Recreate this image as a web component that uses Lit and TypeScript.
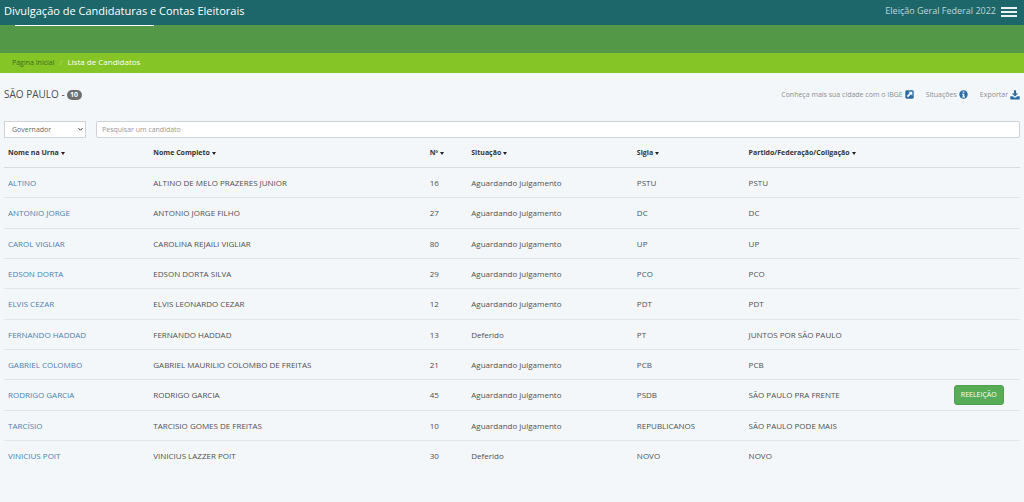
import { LitElement, html, css } from "lit";
import { customElement, state } from "lit/decorators.js";

interface Candidate {
  urna: string;
  nome: string;
  numero: number;
  situacao: string;
  sigla: string;
  coligacao: string;
  reeleicao?: boolean;
}

const PENDING = "Aguardando julgamento";

const CANDIDATES: Candidate[] = [
  { urna: "ALTINO", nome: "ALTINO DE MELO PRAZERES JUNIOR", numero: 16, situacao: PENDING, sigla: "PSTU", coligacao: "PSTU" },
  { urna: "ANTONIO JORGE", nome: "ANTONIO JORGE FILHO", numero: 27, situacao: PENDING, sigla: "DC", coligacao: "DC" },
  { urna: "CAROL VIGLIAR", nome: "CAROLINA REJAILI VIGLIAR", numero: 80, situacao: PENDING, sigla: "UP", coligacao: "UP" },
  { urna: "EDSON DORTA", nome: "EDSON DORTA SILVA", numero: 29, situacao: PENDING, sigla: "PCO", coligacao: "PCO" },
  { urna: "ELVIS CEZAR", nome: "ELVIS LEONARDO CEZAR", numero: 12, situacao: PENDING, sigla: "PDT", coligacao: "PDT" },
  { urna: "FERNANDO HADDAD", nome: "FERNANDO HADDAD", numero: 13, situacao: "Deferido", sigla: "PT", coligacao: "JUNTOS POR SÃO PAULO" },
  { urna: "GABRIEL COLOMBO", nome: "GABRIEL MAURILIO COLOMBO DE FREITAS", numero: 21, situacao: PENDING, sigla: "PCB", coligacao: "PCB" },
  { urna: "RODRIGO GARCIA", nome: "RODRIGO GARCIA", numero: 45, situacao: PENDING, sigla: "PSDB", coligacao: "SÃO PAULO PRA FRENTE", reeleicao: true },
  { urna: "TARCÍSIO", nome: "TARCISIO GOMES DE FREITAS", numero: 10, situacao: PENDING, sigla: "REPUBLICANOS", coligacao: "SÃO PAULO PODE MAIS" },
  { urna: "VINICIUS POIT", nome: "VINICIUS LAZZER POIT", numero: 30, situacao: "Deferido", sigla: "NOVO", coligacao: "NOVO" },
];

const COLUMNS: { key: keyof Candidate; label: string }[] = [
  { key: "urna", label: "Nome na Urna" },
  { key: "nome", label: "Nome Completo" },
  { key: "numero", label: "Nº" },
  { key: "situacao", label: "Situação" },
  { key: "sigla", label: "Sigla" },
  { key: "coligacao", label: "Partido/Federação/Coligação" },
];

@customElement("app-root")
export class AppRoot extends LitElement {
  @state() private sortKey: keyof Candidate = "urna";
  @state() private query = "";

  static styles = css`
    :host {
      display: block;
      min-height: 100vh;
      background: #f4f7fa;
      color: #4f4f4f;
      font-family: "Open Sans", "Noto Sans", sans-serif;
      font-size: 8px;
      line-height: 12px;
    }
    * { box-sizing: border-box; }
    a { color: #4a80b0; text-decoration: none; }
    button, input, select { font: inherit; color: inherit; margin: 0; }

    .topbar {
      display: flex;
      align-items: center;
      justify-content: space-between;
      height: 25px;
      padding: 0 7px 3px 4px;
      background: #1d676a;
      color: #fff;
    }
    .title { margin: 0; font-size: 11px; font-weight: 400; line-height: 16px; }
    .election { display: flex; align-items: center; gap: 5px; font-size: 9px; color: #bdd6d8; }
    .menu { display: flex; padding: 2px 0 0; border: 0; background: none; color: #eaf3f3; }

    .band { height: 28px; padding-left: 15px; background: #529847; }
    .marker { width: 139px; height: 1px; background: #fff; }

    .crumbs { background: #86c526; }
    .crumbs ol { display: flex; gap: 5px; margin: 0; padding: 3px 12px 4px; list-style: none; color: #fff; }
    .crumbs a { color: #3f6a1c; font-size: 7px; }
    .crumbs .sep { color: #b5dc7a; }

    .heading {
      display: flex;
      align-items: center;
      justify-content: space-between;
      padding: 15px 4px 20px;
    }
    .place { display: flex; align-items: center; gap: 2px; margin: 0; font-size: 10px; font-weight: 400; line-height: 13px; }
    .count {
      min-width: 15px;
      border-radius: 5px;
      background: #6f6f6f;
      color: #fff;
      font-size: 7px;
      font-weight: 700;
      line-height: 10px;
      text-align: center;
    }
    .tools { display: flex; gap: 12px; font-size: 7px; }
    .tools a { display: flex; align-items: center; gap: 2px; color: #8b8f94; }
    .tools svg { color: #2c6ca5; }

    .filters { display: flex; gap: 10px; padding: 0 4px; }
    .field {
      height: 17px;
      border: 1px solid #d0d3d6;
      background: #fff;
      font-size: 7px;
      color: #666;
    }
    .pick { position: relative; display: flex; width: 82px; }
    .pick select { width: 100%; padding: 0 7px; border-radius: 0; appearance: none; }
    .pick svg { position: absolute; right: 3px; top: 6px; pointer-events: none; color: #333; }
    .search { flex: 1; min-width: 0; padding: 0 5px; border-radius: 2px; }
    .search::placeholder { color: #999; opacity: 1; }

    .results { padding: 0 4px; }
    table { width: 100%; border-collapse: separate; border-spacing: 0; table-layout: fixed; }
    .c-urna { width: 14.3%; }
    .c-nome { width: 27.2%; }
    .c-numero { width: 4.1%; }
    .c-situacao { width: 16.3%; }
    .c-sigla { width: 11%; }
    .c-coligacao { width: 20.2%; }
    th, td { padding: 0 4px; text-align: left; vertical-align: middle; white-space: nowrap; }
    th { height: 30px; border-bottom: 1px solid #d9dde0; color: #333; font-size: 7px; }
    td { height: 30px; border-bottom: 1px solid #e3e6e9; }
    tbody tr:nth-child(3n + 2) td { height: 31px; }
    tbody tr:last-child td { border-bottom: 0; }
    .sort { display: inline-flex; align-items: center; gap: 2px; padding: 0; border: 0; background: none; font-weight: 700; }
    .caret { margin-top: 2px; border: 2px solid transparent; border-top: 3px solid #222; border-bottom: 0; }
    .reelect {
      padding: 4px 6px;
      border: 1px solid #4da04d;
      border-radius: 3px;
      background: #57ac57;
      color: #fff;
      font-size: 7px;
      line-height: 10px;
    }
  `;

  private get rows(): Candidate[] {
    const q = this.query.toLowerCase();
    return CANDIDATES.filter((c) => `${c.urna} ${c.nome}`.toLowerCase().includes(q)).sort((a, b) => {
      const x = a[this.sortKey] as string | number;
      const y = b[this.sortKey] as string | number;
      return x < y ? -1 : x > y ? 1 : 0;
    });
  }

  render() {
    return html`
      <header>
        <div class="topbar">
          <h1 class="title">Divulgação de Candidaturas e Contas Eleitorais</h1>
          <div class="election">
            <span>Eleição Geral Federal 2022</span>
            <button class="menu" aria-label="Menu">
              <svg width="16" height="10" viewBox="0 0 16 10" fill="currentColor">
                <rect width="16" height="2" /><rect y="4" width="16" height="2" /><rect y="8" width="16" height="2" />
              </svg>
            </button>
          </div>
        </div>
        <div class="band"><div class="marker"></div></div>
        <nav class="crumbs" aria-label="Navegação">
          <ol>
            <li><a href="#">Página Inicial</a></li>
            <li class="sep" aria-hidden="true">/</li>
            <li aria-current="page">Lista de Candidatos</li>
          </ol>
        </nav>
      </header>
      <main>
        <div class="heading">
          <h2 class="place"><span>SÃO PAULO -</span><span class="count">10</span></h2>
          <div class="tools">
            <a href="#">Conheça mais sua cidade com o IBGE
              <svg width="9" height="9" viewBox="0 0 16 16">
                <rect x="0.5" y="0.5" width="15" height="15" rx="2.5" fill="currentColor" />
                <path d="M6 3h7v7l-2.300-2.300-5.200 5.200-2.400-2.400 5.200-5.200z" fill="#f4f7fa" />
              </svg>
            </a>
            <a href="#">Situações
              <svg width="9" height="9" viewBox="0 0 16 16">
                <circle cx="8" cy="8" r="7.500" fill="currentColor" />
                <path d="M6.500 2.500h3v2.500h-3zM5.500 6.500h4v5h1.200v2h-5.200v-2h1.200v-3h-1.200z" fill="#f4f7fa" />
              </svg>
            </a>
            <a href="#">Exportar
              <svg width="10" height="10" viewBox="0 0 16 16" fill="currentColor">
                <path d="M6.300 0.500h3.400v5h3.300l-5 5-5-5h3.300z" />
                <path d="M0.500 10h4l2 2h3l2-2h4v5h-15z" />
              </svg>
            </a>
          </div>
        </div>
        <form class="filters" @submit=${(e: Event) => e.preventDefault()}>
          <div class="pick">
            <select class="field" aria-label="Cargo"><option>Governador</option></select>
            <svg width="5" height="5" viewBox="0 0 5 5" fill="none" stroke="currentColor"><path d="M0.500 1.200l2 2 2-2" /></svg>
          </div>
          <input
            class="field search"
            type="text"
            aria-label="Pesquisar um candidato"
            placeholder="Pesquisar um candidato"
            @input=${(e: Event) => (this.query = (e.target as HTMLInputElement).value)}
          />
        </form>
        <div class="results">
          <table>
            <colgroup>
              ${COLUMNS.map((c) => html`<col class="c-${c.key}" />`)}
              <col />
            </colgroup>
            <thead>
              <tr>
                ${COLUMNS.map(
                  (c) => html`<th scope="col">
                    <button class="sort" @click=${() => (this.sortKey = c.key)}>${c.label}<span class="caret"></span></button>
                  </th>`
                )}
                <th></th>
              </tr>
            </thead>
            <tbody>
              ${this.rows.map(
                (c) => html`<tr>
                  <td><a href="#">${c.urna}</a></td>
                  <td>${c.nome}</td>
                  <td>${c.numero}</td>
                  <td>${c.situacao}</td>
                  <td>${c.sigla}</td>
                  <td>${c.coligacao}</td>
                  <td>${c.reeleicao ? html`<button class="reelect">REELEIÇÃO</button>` : ""}</td>
                </tr>`
              )}
            </tbody>
          </table>
        </div>
      </main>
    `;
  }
}
